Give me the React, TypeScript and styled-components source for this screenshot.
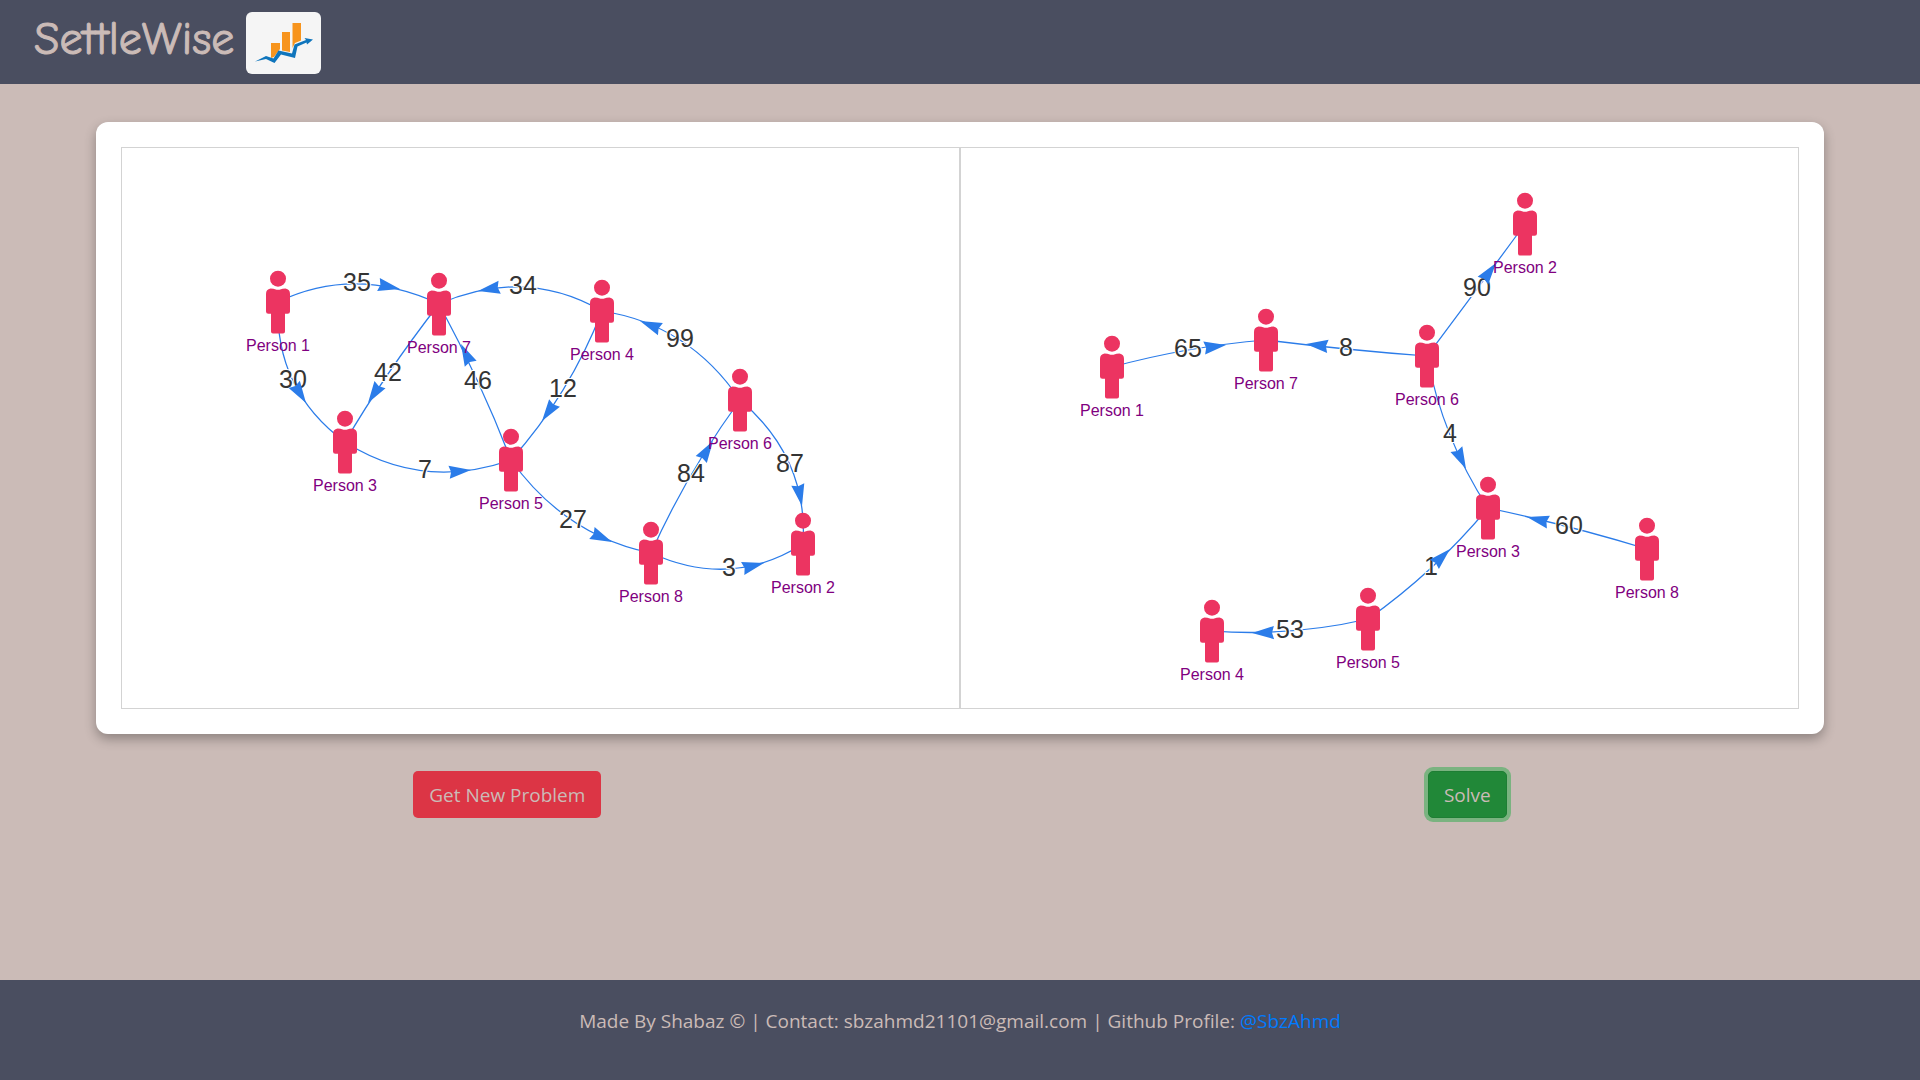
import React from 'react';
import styled, { createGlobalStyle, css } from 'styled-components';

const colors = {
  slate: '#4a4e60',
  sand: '#cbbbb7',
  edge: '#2b7ce9',
  person: '#ec3461',
};

const GlobalStyle = createGlobalStyle`
  *, *::before, *::after { box-sizing: border-box; }
  body {
    margin: 0;
    background: ${colors.sand};
    font-family: "Segoe UI", "Open Sans", "Noto Sans", sans-serif;
    font-size: 19px;
    line-height: 30px;
  }
`;

const Page = styled.div`
  display: flex;
  flex-direction: column;
  min-height: 100vh;
`;

const Header = styled.header`
  display: flex;
  align-items: center;
  gap: 12px;
  padding: 12px 34px 10px;
  background: ${colors.slate};
`;

const Brand = styled.h1`
  margin: 0 0 6px;
  color: ${colors.sand};
  font-family: "Comic Sans MS", "Comic Neue", "Open Sans", sans-serif;
  font-size: 46px;
  font-weight: 400;
  font-variant-ligatures: none;
  line-height: 48px;
  -webkit-text-stroke: 1px ${colors.sand};
`;

const LogoBox = styled.svg`
  display: block;
  width: 75px;
  height: 62px;
  border-radius: 6px;
  background: #f5f5f5;
`;

const Main = styled.main`
  flex: 1;
  padding-top: 38px;
`;

const Card = styled.section`
  display: flex;
  width: 90%;
  margin: 0 auto;
  padding: 25px;
  border-radius: 12px;
  background: #fff;
  box-shadow: 0 5px 12px rgba(0, 0, 0, 0.3);
`;

const Panel = styled.div`
  flex: 1;
  border: 1px solid lightgray;
`;

const Graph = styled.svg`
  display: block;
  width: 100%;
  height: auto;
  font-family: "Liberation Sans", Arial, sans-serif;
  text-anchor: middle;
`;

const EdgeLine = styled.path`
  fill: none;
  stroke: ${colors.edge};
  stroke-width: 1.25;
`;

const ArrowHead = styled.path`
  fill: ${colors.edge};
`;

const EdgeLabel = styled.text`
  fill: #343434;
  stroke: #fff;
  stroke-width: 2;
  paint-order: stroke;
  font-size: 25px;
`;

const NodeLabel = styled.text`
  fill: purple;
  font-size: 16px;
`;

const Actions = styled.div`
  display: flex;
  justify-content: space-around;
  padding: 37px 0;
`;

const Button = styled.button<{ $tone: 'danger' | 'success' }>`
  padding: 9px 16px 7px;
  border: 0;
  border-radius: 5px;
  color: ${colors.sand};
  font: inherit;
  line-height: 31px;
  cursor: pointer;
  ${({ $tone }) =>
    $tone === 'danger'
      ? css`
          background: #dc3545;
        `
      : css`
          background: #218838;
          border: 1px solid #1e7e34;
          padding: 8px 15px 6px;
          box-shadow: 0 0 0 4px #7ab380;
        `}
`;

const Footer = styled.footer`
  padding: 26px 20px 44px;
  background: ${colors.slate};
  color: ${colors.sand};
  text-align: center;
`;

const ProfileLink = styled.a`
  color: #007bff;
  text-decoration: none;
`;

type Point = { x: number; y: number };
type Edge = { from: number; to: number; amount: number; mid: Point; tip: Point };
type Network = { title: string; viewBox: string; people: Record<number, Point>; edges: Edge[] };

const p = (x: number, y: number): Point => ({ x, y });
const e = (from: number, to: number, amount: number, mid: Point, tip: Point): Edge => ({
  from,
  to,
  amount,
  mid,
  tip,
});

const problem: Network = {
  title: 'Debts to settle',
  viewBox: '122 148 837 560',
  people: {
    1: p(278, 302),
    2: p(803, 544),
    3: p(345, 442),
    4: p(602, 311),
    5: p(511, 460),
    6: p(740, 400),
    7: p(439, 304),
    8: p(651, 553),
  },
  edges: [
    e(1, 7, 35, p(357, 284), p(400, 289)),
    e(4, 7, 34, p(523, 287), p(478, 291)),
    e(1, 3, 30, p(293, 381), p(306, 403)),
    e(7, 3, 42, p(388, 374), p(368, 403)),
    e(5, 7, 46, p(478, 382), p(461, 344)),
    e(3, 5, 7, p(425, 471), p(471, 470)),
    e(4, 5, 12, p(563, 390), p(542, 421)),
    e(6, 4, 99, p(680, 340), p(640, 321)),
    e(8, 6, 84, p(691, 475), p(713, 441)),
    e(6, 2, 87, p(790, 465), p(802, 506)),
    e(5, 8, 27, p(573, 521), p(612, 542)),
    e(8, 2, 3, p(729, 569), p(764, 563)),
  ],
};

const solution: Network = {
  title: 'Simplified debts',
  viewBox: '961 148 837 560',
  people: {
    1: p(1112, 367),
    2: p(1525, 224),
    3: p(1488, 508),
    4: p(1212, 631),
    5: p(1368, 619),
    6: p(1427, 356),
    7: p(1266, 340),
    8: p(1647, 549),
  },
  edges: [
    e(1, 7, 65, p(1188, 350), p(1226, 345)),
    e(6, 7, 8, p(1346, 349), p(1306, 344)),
    e(6, 2, 90, p(1477, 289), p(1496, 263)),
    e(6, 3, 4, p(1450, 435), p(1466, 469)),
    e(8, 3, 60, p(1569, 527), p(1527, 517)),
    e(5, 3, 1, p(1431, 568), p(1450, 549)),
    e(5, 4, 53, p(1290, 631), p(1252, 633)),
  ],
};

/* Control point that makes the curve pass through mid halfway along. */
const controlFor = (a: Point, b: Point, mid: Point): Point => ({
  x: 2 * mid.x - (a.x + b.x) / 2,
  y: 2 * mid.y - (a.y + b.y) / 2,
});

/* Direction of the curve, in degrees, where it passes closest to the arrow. */
function headingAt(a: Point, c: Point, b: Point, tip: Point) {
  let best = Infinity;
  let heading = 0;
  for (let t = 0.5; t <= 1; t += 0.01) {
    const u = 1 - t;
    const x = u * u * a.x + 2 * u * t * c.x + t * t * b.x;
    const y = u * u * a.y + 2 * u * t * c.y + t * t * b.y;
    const d = Math.hypot(x - tip.x, y - tip.y);
    if (d < best) {
      best = d;
      const s = t - 0.05;
      heading = Math.atan2(
        (1 - s) * (c.y - a.y) + s * (b.y - c.y),
        (1 - s) * (c.x - a.x) + s * (b.x - c.x),
      );
    }
  }
  return (heading * 180) / Math.PI;
}

function DebtEdge({ edge, people }: { edge: Edge; people: Record<number, Point> }) {
  const a = people[edge.from];
  const b = people[edge.to];
  const c = controlFor(a, b, edge.mid);
  const angle = headingAt(a, c, b, edge.tip);
  return (
    <g>
      <EdgeLine d={`M${a.x} ${a.y}Q${c.x} ${c.y} ${b.x} ${b.y}`} />
      <EdgeLabel x={edge.mid.x} y={edge.mid.y + 7}>
        {edge.amount}
      </EdgeLabel>
      <ArrowHead
        d="M0 0L-22 6.6L-20 0L-22 -6.6Z"
        transform={`translate(${edge.tip.x} ${edge.tip.y}) rotate(${angle})`}
      />
    </g>
  );
}

function Person({ id, at }: { id: number; at: Point }) {
  return (
    <g transform={`translate(${at.x} ${at.y})`}>
      <g fill={colors.person}>
        <circle cx="0" cy="-23.3" r="8" />
        <path d="M-7.5 -13.4Q-4 -13.4 -3 -12.8Q0 -11.8 3 -12.8Q4 -13.4 7.5 -13.4Q12 -12.6 12 -8V9.6Q12 11.8 9.6 11.8H7V29.6Q7 31.6 5 31.6H-5Q-7 31.6 -7 29.6V11.8H-9.6Q-12 11.8 -12 9.6V-8Q-12 -12.6 -7.5 -13.4Z" />
      </g>
      <NodeLabel x="0" y="49">
        Person {id}
      </NodeLabel>
    </g>
  );
}

function DebtGraph({ network }: { network: Network }) {
  return (
    <Panel>
      <Graph viewBox={network.viewBox} role="img" aria-label={network.title}>
        {network.edges.map((edge) => (
          <DebtEdge key={`${edge.from}-${edge.to}`} edge={edge} people={network.people} />
        ))}
        {Object.entries(network.people).map(([id, at]) => (
          <Person key={id} id={Number(id)} at={at} />
        ))}
      </Graph>
    </Panel>
  );
}

function Logo() {
  return (
    <LogoBox viewBox="0 0 75 62" aria-hidden="true">
      <g fill="#f7941d">
        <path d="M25 31H34V37L28 45L25 46Z" />
        <path d="M36 20H44V40L36 38.500Z" />
        <path d="M46.500 11H55V28.500L49 31L46.500 36Z" />
      </g>
      <path
        fill="#0f75bc"
        d="M9 49.500L20 44L27.500 46.500L32.500 38.500L46 41.500L48.500 32.500L60 28L58.500 26L67 27.500L61 32.500L60.500 30.500L51.500 34.500L49 46L35 42.500L28.500 51L20 47Z"
      />
    </LogoBox>
  );
}

export default function App() {
  return (
    <>
      <GlobalStyle />
      <Page>
        <Header>
          <Brand>SettleWise</Brand>
          <Logo />
        </Header>
        <Main>
          <Card>
            <DebtGraph network={problem} />
            <DebtGraph network={solution} />
          </Card>
          <Actions>
            <Button type="button" $tone="danger">
              Get New Problem
            </Button>
            <Button type="button" $tone="success">
              Solve
            </Button>
          </Actions>
        </Main>
        <Footer>
          Made By Shabaz © | Contact: sbzahmd21101@gmail.com | Github Profile:{' '}
          <ProfileLink href="#SbzAhmd">@SbzAhmd</ProfileLink>
        </Footer>
      </Page>
    </>
  );
}
